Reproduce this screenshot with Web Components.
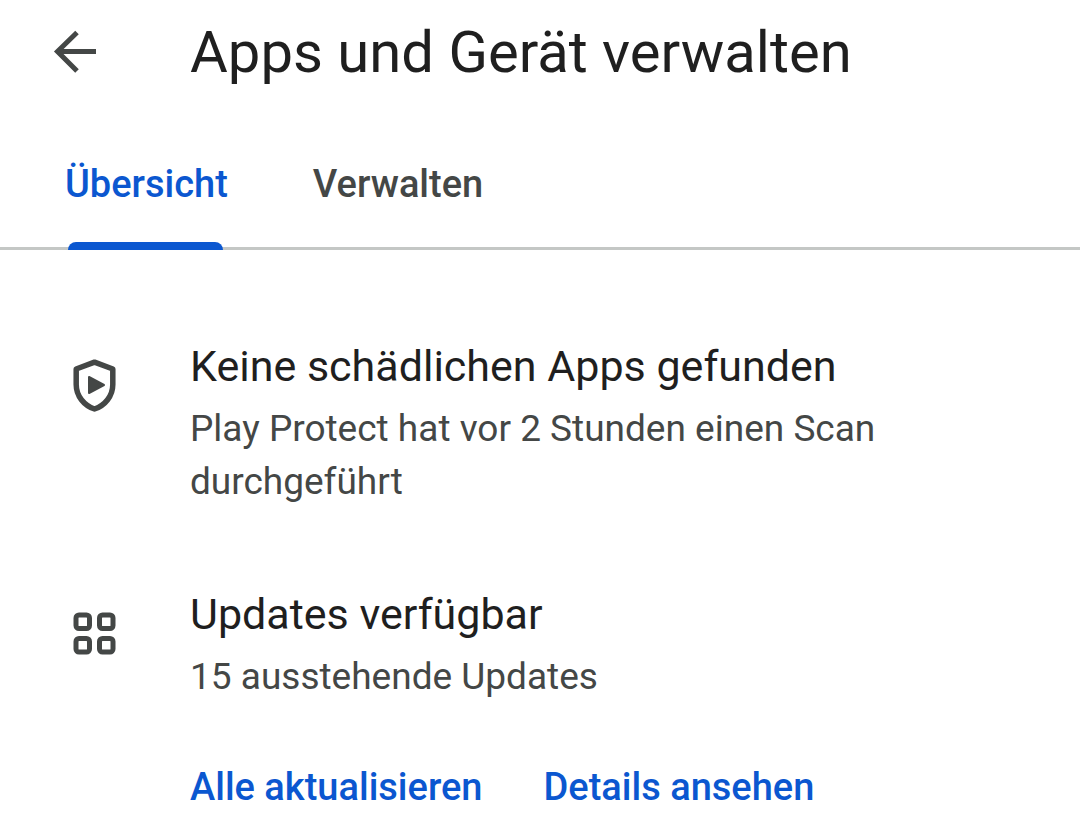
<!DOCTYPE html>
<html lang="de">
<head>
<meta charset="utf-8">
<meta name="viewport" content="width=device-width, initial-scale=1">
<title>Apps und Gerät verwalten</title>
<style>
  body {
    margin: 0;
    background: #fff;
    color: #1f1f1f;
    font-family: "Google Sans", Roboto, sans-serif;
    --accent: #0b57d0;
    --muted: #444746;
    --rail: 190px;
  }
</style>
</head>
<body>
<manage-page>
  <page-bar slot="bar">Apps und Gerät verwalten</page-bar>
  <tab-strip slot="tabs">
    <tab-item selected>Übersicht</tab-item>
    <tab-item>Verwalten</tab-item>
  </tab-strip>
  <status-card>
    <svg slot="icon" width="44" height="54" viewBox="0 0 44 54" aria-hidden="true">
      <path d="M21.500 3.200 39.800 10V25.500C39.800 37 32 46.500 21.500 50 11 46.500 3.200 37 3.200 25.500V10Z" fill="none" stroke="#444746" stroke-width="5.500" stroke-linejoin="round"/>
      <path d="M16 18V34L31 26Z" fill="#444746" stroke="#444746" stroke-width="2" stroke-linejoin="round"/>
    </svg>
    <span slot="title">Keine schädlichen Apps gefunden</span>
    Play Protect hat vor 2 Stunden einen Scan durchgeführt
  </status-card>
  <status-card>
    <svg slot="icon" width="44" height="54" viewBox="0 0 44 54" aria-hidden="true">
      <g fill="none" stroke="#444746" stroke-width="5">
        <rect x="3" y="8" width="13.500" height="13.500" rx="3"/>
        <rect x="26.500" y="8" width="13.500" height="13.500" rx="3"/>
        <rect x="3" y="31.500" width="13.500" height="13.500" rx="3"/>
        <rect x="26.500" y="31.500" width="13.500" height="13.500" rx="3"/>
      </g>
    </svg>
    <span slot="title">Updates verfügbar</span>
    15 ausstehende Updates
    <text-action slot="actions">Alle aktualisieren</text-action>
    <text-action slot="actions">Details ansehen</text-action>
  </status-card>
</manage-page>

<script>
  const define = (name, html, setup) => {
    const template = document.createElement('template');
    template.innerHTML = html;
    customElements.define(name, class extends HTMLElement {
      constructor() {
        super();
        this.attachShadow({ mode: 'open' }).append(template.content.cloneNode(true));
      }
      connectedCallback() {
        if (setup) setup(this);
      }
    });
  };

  define('manage-page', `
    <style>
      :host { display: block; }
      main { display: flex; flex-direction: column; gap: 76px; padding: 86px 64px 12px 0; }
    </style>
    <slot name="bar"></slot>
    <slot name="tabs"></slot>
    <main><slot></slot></main>`);

  define('page-bar', `
    <style>
      :host { display: block; }
      header { display: grid; grid-template-columns: var(--rail) 1fr; align-items: center; padding: 16px 0; }
      button { justify-self: start; display: flex; margin-left: 44px; padding: 8px; border: 0; background: none; }
      h1 { margin: 0; font-size: 58px; line-height: 72px; font-weight: 400; }
    </style>
    <header>
      <button type="button" aria-label="Zurück">
        <svg width="46" height="46" viewBox="0 0 46 46" aria-hidden="true">
          <path d="M44 22.500H6M25 3.500 5.500 22.500 25 42" fill="none" stroke="#444746" stroke-width="5"/>
        </svg>
      </button>
      <h1><slot></slot></h1>
    </header>`);

  define('tab-strip', `
    <style>
      :host { display: block; border-bottom: 3px solid #c4c7c5; }
      nav { display: flex; gap: 85px; padding: 0 65px; }
    </style>
    <nav role="tablist"><slot></slot></nav>`);

  define('tab-item', `
    <style>
      :host { display: block; }
      button {
        position: relative; display: block; padding: 54px 0 37px; border: 0; background: none;
        font-family: inherit; font-size: 38px; line-height: 52px; font-weight: 500; color: var(--muted);
      }
      :host([selected]) button { color: var(--accent); }
      :host([selected]) button::after {
        content: ""; position: absolute; left: 3px; right: 5px; bottom: -3px; height: 8px;
        border-radius: 8px 8px 0 0; background: var(--accent);
      }
    </style>
    <button type="button" role="tab"><slot></slot></button>`,
    host => host.shadowRoot.querySelector('button').setAttribute('aria-selected', host.hasAttribute('selected')));

  define('status-card', `
    <style>
      :host { display: block; }
      section { display: grid; grid-template-columns: var(--rail) 1fr; }
      .icon { margin: 23px 0 0 73px; }
      h2 { margin: 0; font-size: 43px; line-height: 60px; font-weight: 400; }
      p { margin: 6px 0 0; font-size: 37px; line-height: 53px; color: var(--muted); }
      .actions { display: flex; gap: 61px; }
      ::slotted(text-action) { margin-top: 58px; }
    </style>
    <section>
      <div class="icon"><slot name="icon"></slot></div>
      <div>
        <h2><slot name="title"></slot></h2>
        <p><slot></slot></p>
        <div class="actions"><slot name="actions"></slot></div>
      </div>
    </section>`);

  define('text-action', `
    <style>
      :host { display: block; }
      button {
        display: block; padding: 0; border: 0; background: none; color: var(--accent);
        font-family: inherit; font-size: 38px; line-height: 52px; font-weight: 500;
      }
    </style>
    <button type="button"><slot></slot></button>`);
</script>
</body>
</html>
